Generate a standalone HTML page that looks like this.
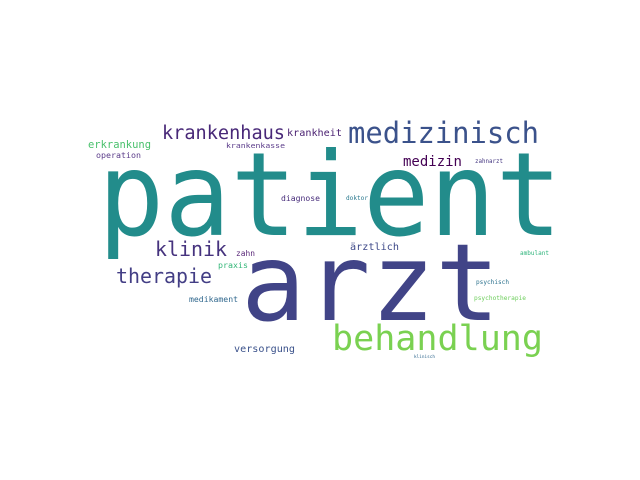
<!DOCTYPE html>
<html><head><meta charset="utf-8"><style>
html,body{margin:0;padding:0;background:#fff;width:640px;height:480px;overflow:hidden}
svg text{font-family:"DejaVu Sans Mono","Liberation Mono",monospace}
</style></head><body>
<svg width="640" height="480" xmlns="http://www.w3.org/2000/svg">
<text x="98" y="235" font-size="116" fill="#228c8b" textLength="464" lengthAdjust="spacingAndGlyphs">patient</text>
<text x="241" y="320" font-size="107" fill="#414487" textLength="259" lengthAdjust="spacingAndGlyphs">arzt</text>
<text x="332" y="350" font-size="35" fill="#7ad151" textLength="211" lengthAdjust="spacingAndGlyphs">behandlung</text>
<text x="348" y="143" font-size="29" fill="#3b528b" textLength="191" lengthAdjust="spacingAndGlyphs">medizinisch</text>
<text x="162" y="139" font-size="18.5" fill="#482878" textLength="123" lengthAdjust="spacingAndGlyphs">krankenhaus</text>
<text x="287" y="136" font-size="10" fill="#481f70" textLength="55" lengthAdjust="spacingAndGlyphs">krankheit</text>
<text x="88" y="148" font-size="10.5" fill="#4ac16d" textLength="63" lengthAdjust="spacingAndGlyphs">erkrankung</text>
<text x="96" y="158" font-size="8.3" fill="#5b3c8a" textLength="45" lengthAdjust="spacingAndGlyphs">operation</text>
<text x="226" y="148" font-size="7" fill="#5b3c8a" textLength="59" lengthAdjust="spacingAndGlyphs">krankenkasse</text>
<text x="403" y="166" font-size="14" fill="#440154" textLength="59" lengthAdjust="spacingAndGlyphs">medizin</text>
<text x="475" y="163" font-size="6" fill="#453781" textLength="28" lengthAdjust="spacingAndGlyphs">zahnarzt</text>
<text x="281" y="201" font-size="8" fill="#472c7a" textLength="39" lengthAdjust="spacingAndGlyphs">diagnose</text>
<text x="346" y="200" font-size="6" fill="#2a788e" textLength="22" lengthAdjust="spacingAndGlyphs">doktor</text>
<text x="155" y="256" font-size="20" fill="#46337e" textLength="72" lengthAdjust="spacingAndGlyphs">klinik</text>
<text x="350" y="250" font-size="10" fill="#3e4989" textLength="49" lengthAdjust="spacingAndGlyphs">ärztlich</text>
<text x="236" y="256" font-size="7.5" fill="#5b2a7a" textLength="19" lengthAdjust="spacingAndGlyphs">zahn</text>
<text x="520" y="255" font-size="6" fill="#2fb47c" textLength="29" lengthAdjust="spacingAndGlyphs">ambulant</text>
<text x="116" y="283" font-size="20" fill="#433e85" textLength="96" lengthAdjust="spacingAndGlyphs">therapie</text>
<text x="218" y="268" font-size="8.3" fill="#35b779" textLength="30" lengthAdjust="spacingAndGlyphs">praxis</text>
<text x="476" y="284" font-size="6" fill="#2c728e" textLength="33" lengthAdjust="spacingAndGlyphs">psychisch</text>
<text x="189" y="302" font-size="8" fill="#31688e" textLength="49" lengthAdjust="spacingAndGlyphs">medikament</text>
<text x="474" y="300" font-size="6" fill="#6ccd5a" textLength="52" lengthAdjust="spacingAndGlyphs">psychotherapie</text>
<text x="234" y="352" font-size="10" fill="#3b528b" textLength="61" lengthAdjust="spacingAndGlyphs">versorgung</text>
<text x="414" y="358" font-size="4.5" fill="#31688e" textLength="21" lengthAdjust="spacingAndGlyphs">klinisch</text>
</svg>
</body></html>
